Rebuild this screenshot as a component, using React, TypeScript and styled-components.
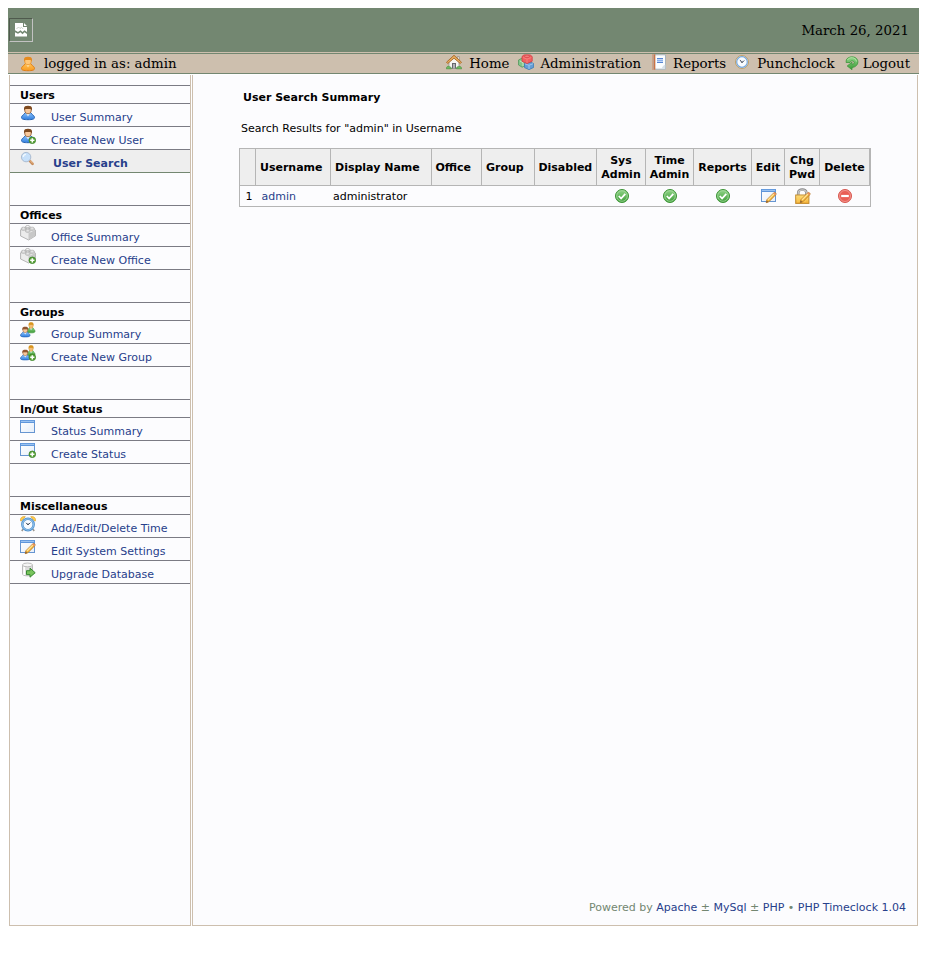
import React from "react";
import styled, { createGlobalStyle, css } from "styled-components";

const GlobalStyle = createGlobalStyle`
  * { box-sizing: border-box; }
  html, body { margin: 0; background: #fff; }
  body { padding: 8px; }
`;

const Page = styled.div`
  width: 911px;
  font-family: "DejaVu Sans", sans-serif;
  font-size: 11px;
  color: #000;
`;

const Banner = styled.header`
  height: 44px;
  background: #738771;
  display: flex;
  align-items: center;
  justify-content: space-between;
  padding: 0 10px 0 1px;
`;

const MissingLogo = styled.span`
  width: 24px;
  height: 24px;
  border: 1px solid;
  border-color: #4f5a4d #c2c2c2 #c2c2c2 #4f5a4d;
  display: flex;
  align-items: center;
  justify-content: center;
`;

const Today = styled.span`
  padding-top: 1px;
  font: 13.33px/17px "DejaVu Serif", serif;
`;

const TopBar = styled.nav`
  height: 22px;
  background: #cdbfae;
  border-top: 1px solid #cdbfae;
  border-bottom: 1px solid #738771;
  box-shadow: inset 0 1px #738771;
  display: flex;
  justify-content: space-between;
  padding: 0 9px 0 12px;
  font: 13.33px/20px "DejaVu Serif", serif;
`;

const LoginStatus = styled.div`
  display: flex;
  gap: 8px;
  padding-top: 1px;
  svg { margin-top: 2px; }
`;

const Menu = styled.div`
  display: flex;
  padding-top: 1px;
`;

const MenuLink = styled.a<{ $gap: number; $before: number; $top?: number }>`
  display: flex;
  color: #000;
  gap: ${(p) => p.$gap}px;
  margin-left: ${(p) => p.$before}px;
  svg { margin-top: ${(p) => p.$top ?? 0}px; }
`;

const Body = styled.div`
  display: flex;
  gap: 1px;
  margin: 1px 1px 0;
  height: 851px;
`;

const Sidebar = styled.aside`
  width: 182px;
  background: #fcfcfe;
  border: 1px solid #cdbfae;
  border-top: 0;
  padding-top: 10px;
`;

const Section = styled.section`
  margin-bottom: 32px;
`;

const SectionTitle = styled.h2`
  margin: 0;
  height: 19px;
  border: solid #7b7b84;
  border-width: 1px 0;
  padding-left: 10px;
  font-size: 11px;
  line-height: 19px;
`;

const SideLink = styled.a<{ $active?: boolean }>`
  display: flex;
  height: 23px;
  gap: 15px;
  padding: 1px 0 0 10px;
  border-bottom: 1px solid #7b7b84;
  color: #27408b;
  line-height: 25px;
  ${(p) => p.$active && css`
    background: #eee;
    border-color: #738771;
    font-weight: bold;
    gap: 17px;
  `}
`;

const Main = styled.main`
  flex: 1;
  background: #fcfcfe;
  border: 1px solid #cdbfae;
  border-top: 0;
  padding: 15px 11px 10px 46px;
  display: flex;
  flex-direction: column;
`;

const Title = styled.h1`
  margin: 0 0 0 4px;
  font-size: 11px;
  line-height: 15px;
`;

const Summary = styled.p`
  margin: 16px 0 12px 2px;
  line-height: 15px;
`;

const columns = "16px 75px 101px 50px 53px 62px 49px 48px 58px 33px 35px 50px";

const Results = styled.div`
  width: 632px;
  border: 1px solid #b5b5b5;
`;

const HeadRow = styled.div`
  display: grid;
  grid-template-columns: ${columns};
  height: 37px;
  border-bottom: 1px solid #b5b5b5;
  background: #eee;
`;

const HeadCell = styled.div<{ $center?: boolean; $inset?: number }>`
  display: flex;
  align-items: center;
  justify-content: ${(p) => (p.$center ? "center" : "flex-start")};
  text-align: center;
  border-right: 1px solid #b5b5b5;
  padding: ${(p) => (p.$center ? "2px 0 0" : `2px 0 0 ${p.$inset ?? 4}px`)};
  font-weight: bold;
  line-height: 14px;
`;

const DataRow = styled.div`
  display: grid;
  grid-template-columns: ${columns};
  height: 20px;
  line-height: 21px;
`;

const Cell = styled.div<{ $inset?: number; $icon?: boolean }>`
  padding-left: ${(p) => p.$inset ?? 0}px;
  ${(p) => p.$icon && css`
    display: flex;
    padding-top: 2px;
  `}
`;

const Link = styled.a`
  color: #27408b;
`;

const Footer = styled.footer`
  margin-top: auto;
  text-align: right;
  line-height: 15px;
  color: #738771;
`;

const Icon = styled.svg.attrs({ viewBox: "0 0 16 16", width: 16, height: 16 })`
  display: block;
  flex: none;
`;

const Definitions = styled.svg`
  display: block;
`;

const Gradients = () => (
  <Definitions width="0" height="0">
    <defs>
      <linearGradient id="blue" x2="0" y2="1"><stop stopColor="#8fc3fa" /><stop offset="1" stopColor="#2f7ee0" /></linearGradient>
      <linearGradient id="orange" x2="0" y2="1"><stop stopColor="#ffc35a" /><stop offset="1" stopColor="#f89a20" /></linearGradient>
      <linearGradient id="green" x2="0" y2="1"><stop stopColor="#93d68a" /><stop offset="1" stopColor="#3a9b35" /></linearGradient>
      <linearGradient id="gold" x2="0" y2="1"><stop stopColor="#ffe58c" /><stop offset="1" stopColor="#f3ae33" /></linearGradient>
      <linearGradient id="pane" x2="1" y2="1"><stop stopColor="#fff" /><stop offset="1" stopColor="#e5eefa" /></linearGradient>
    </defs>
  </Definitions>
);

const Plus = () => (
  <g>
    <circle cx="12.3" cy="12.3" r="3.3" fill="#5aa33a" stroke="#3c8428" strokeWidth=".8" />
    <path d="M12.3 10.2v4.2M10.2 12.3h4.2" stroke="#fff" strokeWidth="1.5" />
  </g>
);

const Person = ({ hair, body, edge, face = "#f8c89b", shirt = "#e4f0fc" }: { hair: string; body: string; edge: string; face?: string; shirt?: string }) => (
  <g>
    <path d="M1.5 12.6c0-1.5 1.1-2.3 2.2-3L5.4 7.6h5.2l1.7 2c1.1.7 2.2 1.5 2.2 3 0 1.5-2 2.1-6.5 2.1s-6.5-.6-6.5-2.1Z" fill={body} stroke={edge} />
    <path d="M5.8 8h4.4L8 11.4Z" fill={shirt} />
    <path d="M4.8 3.5v2.4C4.8 7.6 6.3 8.7 8 8.7s3.2-1.1 3.2-2.8V3.5Z" fill={face} stroke={hair} strokeWidth=".7" />
    <path d="M4 5.7V3.2C4 1.5 5.5.7 8 .7s4 .8 4 2.5v2.5l-1.2-1.6H5.2Z" fill={hair} />
  </g>
);

const UserIcon = ({ add }: { add?: boolean }) => (
  <Icon><Person hair="#7e4a20" body="url(#blue)" edge="#2864b4" />{add && <Plus />}</Icon>
);

const OrangeUserIcon = () => (
  <Icon><Person hair="#e58b20" body="url(#orange)" edge="#e07e16" face="#ffc778" shirt="#ffdc9b" /></Icon>
);

const GroupIcon = ({ add }: { add?: boolean }) => (
  <Icon>
    <g transform="translate(6.2 -.3) scale(.61 .76)"><Person hair="#d8941e" body="url(#green)" edge="#4b9b49" face="#f4bd76" /></g>
    <g transform="translate(-.6 4.2) scale(.73)"><Person hair="#91552f" body="url(#blue)" edge="#2864b4" /></g>
    {add && <Plus />}
  </Icon>
);

const BrickIcon = ({ add }: { add?: boolean }) => (
  <Icon>
    <path d="M.6 4.8 7.5 2.2l8 3v5.6L8.7 15 .6 11Z" fill="#ececec" stroke="#a5a5a5" strokeWidth=".8" />
    <path d="M8.5 8.2 15.2 5v5.8l-6.7 4Z" fill="#c8c8c8" />
    <g fill="#f8f8f8" stroke="#a5a5a5" strokeWidth=".7">
      <path d="M5.6 1.5v1.8q2 1.2 4.2 0V1.5" /><ellipse cx="7.7" cy="1.5" rx="2.1" ry="1" />
      <path d="M1.4 3.2v1.7q2 1.2 4.2 0V3.2" /><ellipse cx="3.5" cy="3.2" rx="2.1" ry="1" />
      <path d="M10 3.2v1.7q2 1.2 4.2 0V3.2" /><ellipse cx="12.1" cy="3.2" rx="2.1" ry="1" />
      <path d="M5.7 5.2v1.7q2 1.2 4.2 0V5.2" /><ellipse cx="7.8" cy="5.2" rx="2.1" ry="1" />
    </g>
    {add && <Plus />}
  </Icon>
);

const SearchIcon = () => (
  <Icon>
    <path d="m9.8 9.9 2.8 3" stroke="#c68a58" strokeWidth="2.6" strokeLinecap="round" />
    <path d="m10.3 9.7 2.3 2.5" stroke="#efc294" strokeWidth="1" strokeLinecap="round" />
    <circle cx="6.1" cy="6.1" r="4.7" fill="#c6e0fa" stroke="#aabbd1" />
    <path d="M3.2 5.8c.2-1.5 1.2-2.5 2.7-2.5" fill="none" stroke="#f3faff" strokeWidth="1.3" />
  </Icon>
);

const Pane = () => (
  <g>
    <rect x=".5" y="1.5" width="14" height="12" fill="url(#pane)" stroke="#6695d1" />
    <path d="M0 1h15v3H0z" fill="#5e96dc" />
    <path d="M1 2.4h13" stroke="#a2c7f2" />
  </g>
);

const Pencil = () => (
  <g>
    <path d="m5.2 14.7.7-3 7-7q.8-.6 1.7.2t.2 1.8l-6.8 7Z" fill="#f3b437" stroke="#b9782a" strokeWidth=".8" />
    <path d="m7 12 6-6" stroke="#ffe395" strokeWidth="1.2" />
    <path d="m12.7 4.8 1.9 1.9" stroke="#e98f69" strokeWidth="1.5" />
    <path d="m5.2 14.7.5-2.3 1.7 1.6Z" fill="#815d36" />
  </g>
);

const WindowIcon = ({ add, edit }: { add?: boolean; edit?: boolean }) => (
  <Icon><Pane />{add && <Plus />}{edit && <Pencil />}</Icon>
);

const AlarmIcon = () => (
  <Icon>
    <path d="m3.2 13-1.4 2M12.8 13l1.4 2" stroke="#9b958d" strokeWidth="1.6" />
    <path d="M.5 4.8C.1 2 2 .2 5.3.7L1.6 4.9ZM15.5 4.8c.4-2.8-1.5-4.6-4.8-4.1l3.7 4.2Z" fill="#ffcf50" stroke="#dca12e" strokeWidth=".7" />
    <circle cx="8" cy="8.5" r="5.7" fill="#f7fbff" stroke="#4f91cd" strokeWidth="2.4" />
    <circle cx="8" cy="8.5" r="5.6" fill="none" stroke="#8abce9" strokeWidth="1.1" />
    <path d="m6 6.8 2 2.2 2.4-2.4M8 9V7.3" fill="none" stroke="#4d5767" />
  </Icon>
);

const DatabaseIcon = () => (
  <Icon>
    <path d="M2.5 2.9v9c0 2.6 10 2.6 10 0v-9" fill="#dcdcdc" stroke="#b5b5b5" strokeWidth=".9" />
    <path d="M4.2 4.5V13" stroke="#fff" strokeWidth="1.8" />
    <ellipse cx="7.5" cy="2.9" rx="5" ry="1.9" fill="#f5f5f5" stroke="#b5b5b5" strokeWidth=".9" />
    <path d="M6.5 8.7H10V6.2l5.2 4.5L10 15.2v-2.6H6.5Z" fill="#78c45d" stroke="#398932" />
  </Icon>
);

const HomeIcon = () => (
  <Icon>
    <path d="M3 7.3 8 3l5 4.3v7H3Z" fill="#f6f6f3" stroke="#969188" strokeWidth=".8" />
    <path d="M11.3 5V2.6h2v4" fill="#eee" stroke="#968c82" strokeWidth=".8" />
    <path d="M.5 8.2 8 1.3l7.5 6.9-1.2 1.3L8 4.2 1.7 9.5Z" fill="#e7ad5f" stroke="#a66526" strokeWidth=".9" />
    <path d="M6 9h4v5.6H6Z" fill="#67676d" />
    <path d="M7 10h2v4.6H7Z" fill="#b1b3b7" />
    <path d="M.3 14.8c0-2.2 1.8-3.2 3.3-2.1 1 .1 1.8 1 1.8 2.1ZM10.4 14.8c0-1.4.8-2.2 2.2-2.2 1.8-.7 3.1.5 3.1 2.2Z" fill="#6dbb60" stroke="#438b3b" strokeWidth=".6" />
  </Icon>
);

const AdminIcon = () => (
  <Icon>
    <path d="m.5 6 3.8-2 4 2v5l-4.1 2.2L.5 11Z" fill="#83c58b" stroke="#53965b" strokeWidth=".8" />
    <path d="m2 7 3 1.7v3.5" fill="none" stroke="#c8e6c5" />
    <path d="m6.5 9.5 4.5-2 4.6 2v4L11 15.6l-4.5-2Z" fill="#659dd6" stroke="#397bb5" strokeWidth=".8" />
    <path d="m7 9.8 4 1.5 4-1.6M11 11.5V15" fill="none" stroke="#9fc7ed" />
    <path d="m4 2.5 2-1.6h6.2l2 1.7v4.6L9.2 9.6 4 7.3Z" fill="#ef6161" stroke="#d43c42" strokeWidth=".8" />
    <path d="m5 3.5 4 1.6 4.3-1.5M9 5.4v3.5" fill="none" stroke="#f98783" strokeWidth=".8" />
    <ellipse cx="9" cy="2.3" rx="2.6" ry="1.2" fill="#f47e7c" stroke="#cf3c42" strokeWidth=".6" />
  </Icon>
);

const ReportIcon = () => (
  <Icon>
    <path d="M2.5.8h12v14.4h-12Z" fill="#fafdff" stroke="#a7b4bd" />
    <path d="M10.5 14.7c.5-2 2-3.5 3.8-4.3v4.3Z" fill="#d7e0e8" />
    <path d="M3 .5h1.3v14.9H3Z" fill="#c2612c" />
    <path d="M1 1h3M1 3h3M1 5h3M1 7h3M1 9h3M1 11h3M1 13h3M1 15h3" stroke="#cf8660" />
    <path d="M6 4.5h6M6 8.5h6" stroke="#5785d3" />
    <path d="M6 6.5h6" stroke="#8ab1ed" strokeWidth="2" />
  </Icon>
);

const ClockIcon = () => (
  <Icon>
    <circle cx="8" cy="8" r="6.4" fill="#f9fcff" stroke="#b99759" />
    <circle cx="8" cy="8" r="5.3" fill="none" stroke="#76a8df" strokeWidth="1.2" />
    <path d="m6 5.9 2 2.9 2.3-2.4M8 8.8V6.9" fill="none" stroke="#535b6b" />
  </Icon>
);

const LogoutIcon = () => (
  <Icon>
    <path d="M2.3 5C3.8 1 12 .4 13.6 5.3c1.2 3.9-1.8 6.9-5.6 7.2v2.2L3.2 11l4.8-3.8v2.2c2.8-.4 2.8-2.9.6-3.4-1.4-.3-2.2.4-2.6 1.5H2.1Z" fill="url(#green)" stroke="#3e943b" strokeWidth=".8" />
    <path d="M3.5 5c1.8-3.5 8.3-3 9 1.5" fill="none" stroke="#b5e4a8" strokeWidth=".9" />
  </Icon>
);

const AcceptIcon = () => (
  <Icon>
    <circle cx="8" cy="8" r="6.5" fill="url(#green)" stroke="#3b9434" />
    <circle cx="8" cy="8" r="5.3" fill="none" stroke="#a5d8a0" strokeWidth=".8" />
    <path d="m4.8 8 2.3 2.5 4.2-4.7" fill="none" stroke="#fff" strokeWidth="1.8" />
  </Icon>
);

const DeleteIcon = () => (
  <Icon>
    <circle cx="8" cy="8" r="6.5" fill="#e95f55" stroke="#d75850" />
    <circle cx="8" cy="8" r="5.5" fill="none" stroke="#f3a099" strokeWidth=".8" />
    <path d="M4.2 8h7.6" stroke="#fff" strokeWidth="2.2" />
  </Icon>
);

const PasswordIcon = () => (
  <Icon>
    <path d="M3.2 7.5V5C3.2.3 11.4.3 11.4 5v2.5" fill="none" stroke="#888" strokeWidth="2.6" />
    <path d="M3.2 7.5V5C3.2.7 11.4.7 11.4 5v2.5" fill="none" stroke="#c9c9c9" strokeWidth="1.2" />
    <rect x=".7" y="7" width="13.2" height="8.4" fill="url(#gold)" stroke="#c28a2c" />
    <path d="M2 9h9M2 11h9M2 13h9" stroke="#f9ce5d" />
    <Pencil />
  </Icon>
);

const sections = [
  { title: "Users", links: [
    { label: "User Summary", icon: <UserIcon /> },
    { label: "Create New User", icon: <UserIcon add /> },
    { label: "User Search", icon: <SearchIcon />, active: true },
  ] },
  { title: "Offices", links: [
    { label: "Office Summary", icon: <BrickIcon /> },
    { label: "Create New Office", icon: <BrickIcon add /> },
  ] },
  { title: "Groups", links: [
    { label: "Group Summary", icon: <GroupIcon /> },
    { label: "Create New Group", icon: <GroupIcon add /> },
  ] },
  { title: "In/Out Status", links: [
    { label: "Status Summary", icon: <WindowIcon /> },
    { label: "Create Status", icon: <WindowIcon add /> },
  ] },
  { title: "Miscellaneous", links: [
    { label: "Add/Edit/Delete Time", icon: <AlarmIcon /> },
    { label: "Edit System Settings", icon: <WindowIcon edit /> },
    { label: "Upgrade Database", icon: <DatabaseIcon /> },
  ] },
] as { title: string; links: { label: string; icon: React.ReactNode; active?: boolean }[] }[];

export default function App() {
  return (
    <Page>
      <GlobalStyle />
      <Gradients />
      <Banner>
        <MissingLogo>
          <svg width="12" height="14" viewBox="0 0 12 14">
            <path d="M0 0h8v4h4v5L9.5 7.2 7.5 9 5.5 7.2 3 9 0 7.2Z" fill="#fff" />
            <path d="M9 0v3h3ZM0 9.2l3 1.6 2.5-1.6 2 2 2-2L12 11v2.5H0Z" fill="#fff" />
            <path d="m1.5 6 2-2 1.5 1.5L6.5 4.3l1.7 1.7" fill="none" stroke="#b9c4b8" strokeWidth=".8" />
          </svg>
        </MissingLogo>
        <Today>March 26, 2021</Today>
      </Banner>
      <TopBar>
        <LoginStatus><OrangeUserIcon />logged in as: admin</LoginStatus>
        <Menu>
          <MenuLink $gap={7} $before={0}><HomeIcon />Home</MenuLink>
          <MenuLink $gap={6} $before={9}><AdminIcon />Administration</MenuLink>
          <MenuLink $gap={6} $before={10}><ReportIcon />Reports</MenuLink>
          <MenuLink $gap={7} $before={8}><ClockIcon />Punchclock</MenuLink>
          <MenuLink $gap={3} $before={9} $top={1}><LogoutIcon />Logout</MenuLink>
        </Menu>
      </TopBar>
      <Body>
        <Sidebar>
          {sections.map((section) => (
            <Section key={section.title}>
              <SectionTitle>{section.title}</SectionTitle>
              {section.links.map((link) => (
                <SideLink key={link.label} $active={link.active}>{link.icon}{link.label}</SideLink>
              ))}
            </Section>
          ))}
        </Sidebar>
        <Main>
          <Title>User Search Summary</Title>
          <Summary>Search Results for "admin" in Username</Summary>
          <Results>
            <HeadRow>
              <HeadCell />
              <HeadCell>Username</HeadCell>
              <HeadCell>Display Name</HeadCell>
              <HeadCell $inset={3.4}>Office</HeadCell>
              <HeadCell>Group</HeadCell>
              <HeadCell $inset={3.4}>Disabled</HeadCell>
              <HeadCell $center>Sys<br />Admin</HeadCell>
              <HeadCell $center>Time<br />Admin</HeadCell>
              <HeadCell $center>Reports</HeadCell>
              <HeadCell $center>Edit</HeadCell>
              <HeadCell $center>Chg<br />Pwd</HeadCell>
              <HeadCell $center>Delete</HeadCell>
            </HeadRow>
            <DataRow>
              <Cell $inset={5.4}>1</Cell>
              <Cell $inset={5.5}><Link>admin</Link></Cell>
              <Cell $inset={2}>administrator</Cell>
              <Cell />
              <Cell />
              <Cell />
              <Cell $icon $inset={17}><AcceptIcon /></Cell>
              <Cell $icon $inset={16}><AcceptIcon /></Cell>
              <Cell $icon $inset={21}><AcceptIcon /></Cell>
              <Cell $icon $inset={9}><WindowIcon edit /></Cell>
              <Cell $icon $inset={10}><PasswordIcon /></Cell>
              <Cell $icon $inset={17}><DeleteIcon /></Cell>
            </DataRow>
          </Results>
          <Footer>
            Powered by <Link>Apache</Link> ± <Link>MySql</Link> ± <Link>PHP</Link> • <Link>PHP Timeclock 1.04</Link>
          </Footer>
        </Main>
      </Body>
    </Page>
  );
}
